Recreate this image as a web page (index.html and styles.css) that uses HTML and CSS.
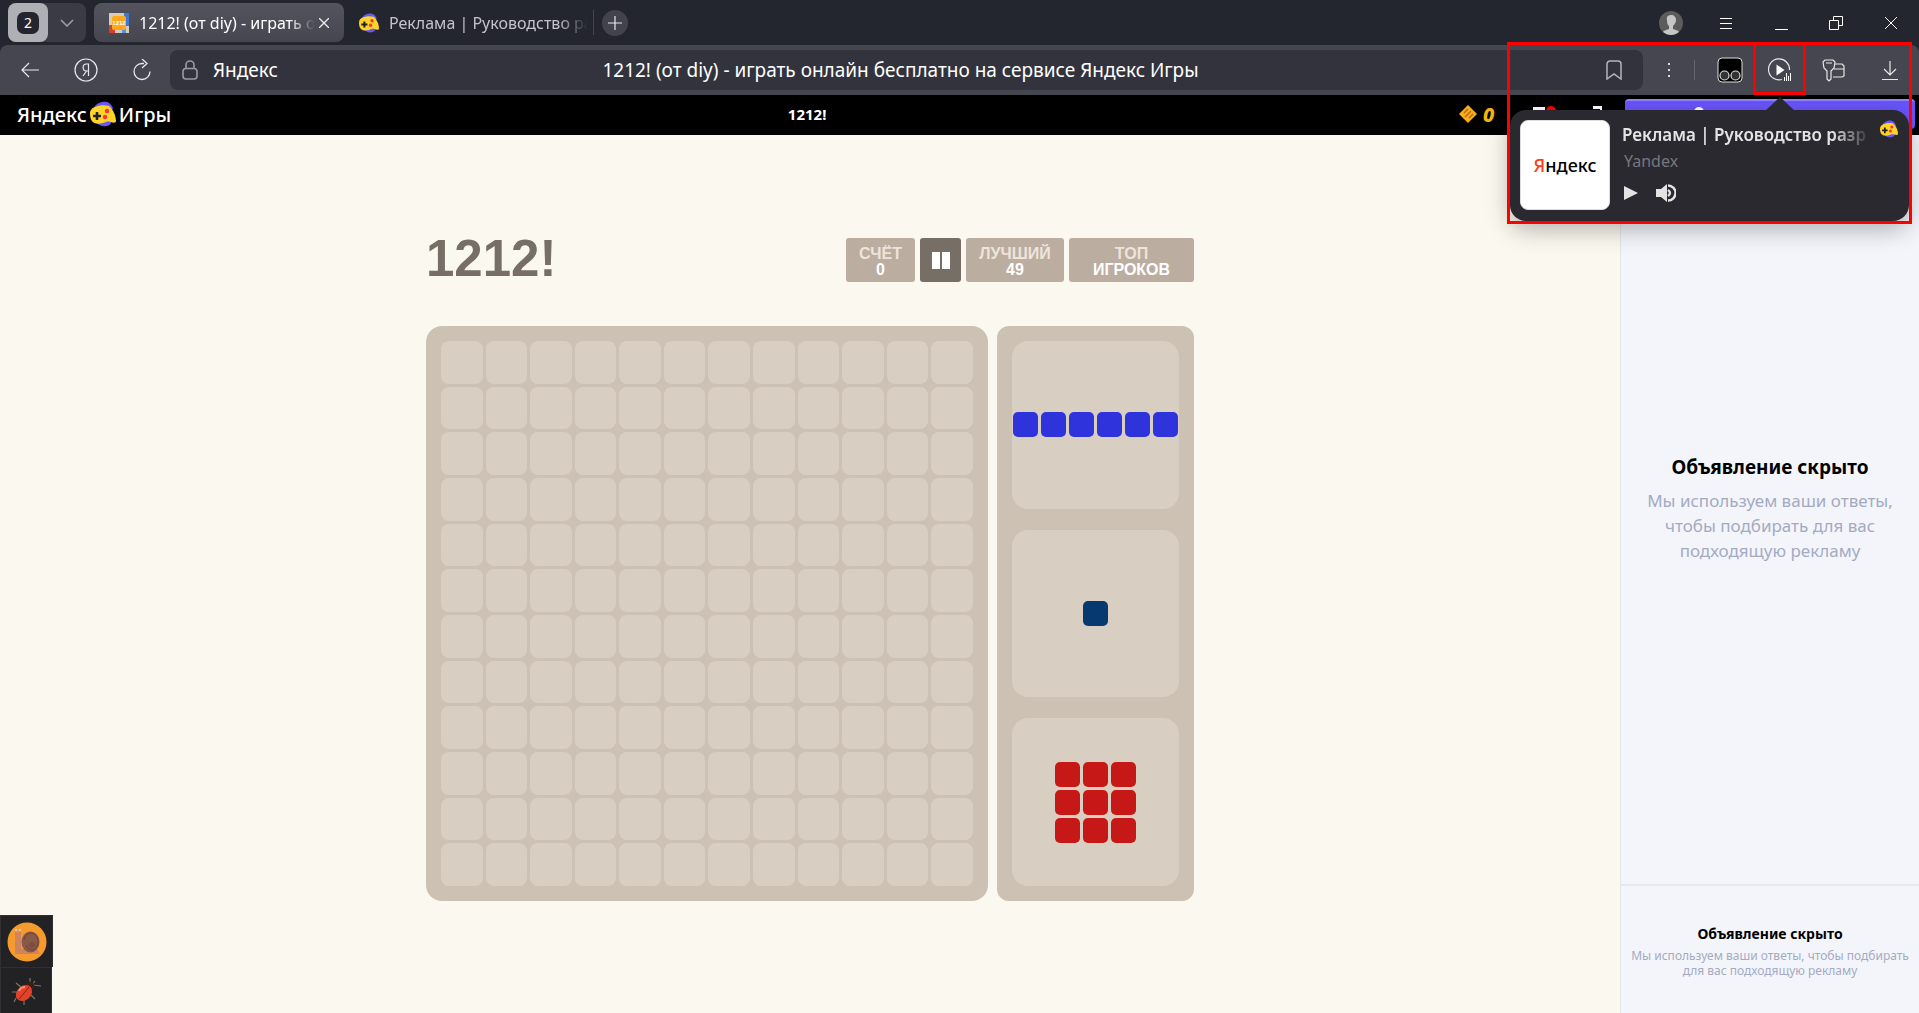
FILE: index.html
```html
<!DOCTYPE html>
<html lang="ru">
<head>
  <meta charset="UTF-8">
  <meta name="viewport" content="width=device-width, initial-scale=1.0">
  <title>1212! (от diy) - играть онлайн бесплатно на сервисе Яндекс Игры</title>
  <link rel="stylesheet" href="styles.css">
</head>
<body>
  <!-- Shared gamepad logo -->
  <svg class="defs" width="0" height="0" aria-hidden="true">
    <symbol id="gamepad" viewBox="0 0 26 26">
      <path d="M3 8C6 2 12 0 17 1c3 1 5 3 6 7l-8 3z" fill="#6b57f5"/>
      <path d="M3 18c3 5 9 8 13 7 3 0 5-2 6-5l-8-3z" fill="#6b57f5"/>
      <path d="M5 6c5-2 10-2 14-1 4 3 7 10 7 15 0 2-3 2-5 1-3-1-5 0-8 1-4 1-8 1-10-1-2-1-3-5-3-8 0-4 2-6 5-7z" fill="#fed42b"/>
      <path d="M7 11v8M3 15h8" stroke="#222" stroke-width="2.600"/>
      <circle cx="17" cy="10" r="2.200" fill="#f33"/>
      <circle cx="15" cy="16" r="2.200" fill="#f33"/>
    </symbol>
  </svg>

  <!-- Browser tabs -->
  <header class="tab-bar">
    <div class="tab-group">
      <button class="group-count" aria-label="Вкладки"><span>2</span></button>
      <button class="group-arrow" aria-label="Группы">
        <svg width="14" height="8" viewBox="0 0 14 8"><path d="M1 1l6 6 6-6" fill="none" stroke="#a0a0a8" stroke-width="1.500"/></svg>
      </button>
    </div>
    <div class="tab active">
      <svg width="20" height="20" viewBox="0 0 20 20">
        <rect width="20" height="20" fill="#d8cbb8"/>
        <path d="M15 0h5v13h-5z" fill="#3c78d8"/><path d="M0 12h6v8H0z" fill="#d6402c"/><path d="M13 15h4v5h-4z" fill="#5a93e2"/>
        <rect x="3" y="3" width="14" height="14" rx="2" fill="#ffa81c"/>
        <text x="10" y="12" text-anchor="middle" class="fav-text">1212</text>
      </svg>
      <span class="tab-title">1212! (от diy) - играть о</span>
      <button class="tab-close" aria-label="Закрыть вкладку">
        <svg width="10" height="10" viewBox="0 0 10 10"><path d="M0 0l10 10M10 0L0 10" stroke="#eee" stroke-width="1.300"/></svg>
      </button>
    </div>
    <div class="tab">
      <svg width="20" height="20"><use href="#gamepad"/></svg>
      <span class="tab-title">Реклама | Руководство ра</span>
    </div>
    <button class="new-tab" aria-label="Новая вкладка">
      <svg width="14" height="14" viewBox="0 0 14 14"><path d="M7 0v14M0 7h14" stroke="#e8e8ea" stroke-width="1.200"/></svg>
    </button>
    <div class="window-buttons">
      <button aria-label="Профиль">
        <svg width="24" height="24" viewBox="0 0 24 24">
          <circle cx="12" cy="12" r="12" fill="#5c5c5c"/>
          <path d="M12 4c-3 0-5 2-4 5 0 4 1 5 2 6v3c-2 1-5 1-6 3 5 4 11 4 16 0-1-2-4-2-6-3v-3c1-1 3-3 3-6 0-3-2-5-5-5z" fill="#c6c6c6"/>
        </svg>
      </button>
      <button aria-label="Меню">
        <svg width="14" height="14" viewBox="0 0 14 14"><path d="M1 2.500h12M1 7.500h12M1 12.500h12" stroke="#fff"/></svg>
      </button>
      <button aria-label="Свернуть">
        <svg width="14" height="14" viewBox="0 0 14 14"><path d="M1 13.500h13" stroke="#fff"/></svg>
      </button>
      <button aria-label="Развернуть">
        <svg width="14" height="14" viewBox="0 0 14 14"><path d="M.5 4.500h9v9h-9zM4.500 4V.5h9v9H10" fill="none" stroke="#fff"/></svg>
      </button>
      <button aria-label="Закрыть">
        <svg width="14" height="14" viewBox="0 0 14 14"><path d="M1 1l12 12M13 1L1 13" stroke="#fff"/></svg>
      </button>
    </div>
  </header>

  <!-- Address bar -->
  <nav class="toolbar">
    <button class="tool" aria-label="Назад">
      <svg width="18" height="16" viewBox="0 0 18 16"><path d="M18 8H1M8 1L1 8l7 7" fill="none" stroke="#e8e8ea" stroke-width="1.200"/></svg>
    </button>
    <button class="tool" aria-label="Яндекс">
      <svg width="24" height="24" viewBox="0 0 24 24" fill="none" stroke="#e8e8ea" stroke-width="1.200">
        <circle cx="12" cy="12" r="11"/><path d="M14.500 18V6h-2C8 6 8 13 12.500 13h2M12.500 13L9 18"/>
      </svg>
    </button>
    <button class="tool" aria-label="Обновить">
      <svg width="18" height="22" viewBox="0 0 18 22" fill="none" stroke="#e8e8ea" stroke-width="1.300"><path d="M11 4.500H9a8 8 0 1 0 8 8M9 0l5 4.500L9 9"/></svg>
    </button>
    <div class="address">
      <svg width="16" height="20" viewBox="0 0 16 20" fill="none" stroke="#9b9ba2" stroke-width="1.600">
        <rect x="1" y="8.500" width="14" height="10.500" rx="3"/><path d="M4 8V5a4 4 0 0 1 8 0v3"/>
      </svg>
      <span class="site">Яндекс</span>
      <span class="page-title">1212! (от diy) - играть онлайн бесплатно на сервисе Яндекс Игры</span>
      <button class="bookmark" aria-label="В закладки">
        <svg width="16" height="20" viewBox="0 0 16 20"><path d="M1 19V4a3 3 0 0 1 3-3h8a3 3 0 0 1 3 3v15l-7-5z" fill="none" stroke="#b4b4ba" stroke-width="1.500"/></svg>
      </button>
    </div>
    <div class="extensions">
      <button class="dots" aria-label="Ещё">
        <svg width="4" height="16" viewBox="0 0 4 16" fill="#dcdce0"><path d="M1 1h2v2H1zM1 7h2v2H1zM1 13h2v2H1z"/></svg>
      </button>
      <button class="tool monkey" aria-label="Tampermonkey">
        <svg width="26" height="26" viewBox="0 0 26 26" stroke="#ddd">
          <rect x="1" y="1" width="24" height="24" rx="4"/>
          <circle cx="7.500" cy="18.500" r="4.500" fill="#333" stroke-width="1.200"/><circle cx="18.500" cy="18.500" r="4.500" fill="#333" stroke-width="1.200"/>
        </svg>
      </button>
      <button class="tool" aria-label="Медиа">
        <svg width="24" height="24" viewBox="0 0 24 24">
          <path d="M14 21.500A10.500 10.500 0 1 1 21.500 12" fill="none" stroke="#e8e8ea" stroke-width="1.200"/>
          <path d="M8.500 6.500v11l8-5.500z" fill="#fff"/>
          <path d="M16.500 19v4M18.500 15v8M20.500 18v5M22.500 15v8" stroke="#fff"/>
        </svg>
      </button>
      <button class="tool" aria-label="Пароли">
        <svg width="24" height="24" viewBox="0 0 24 24" fill="none" stroke="#e8e8ea" stroke-width="1.200">
          <path d="M3 2h8l2 2-1 6-3 3v8l-2 2-2-2v-8l-3-3-1-6zM4 5h6"/><path d="M13 6h7l2 2v10l-2 1h-9M12 11h10"/>
        </svg>
      </button>
      <button class="tool" aria-label="Загрузки">
        <svg width="16" height="20" viewBox="0 0 16 20"><path d="M8 1v14M2 9l6 6 6-6M0 19.500h16" fill="none" stroke="#e8e8ea" stroke-width="1.200"/></svg>
      </button>
    </div>
  </nav>

  <!-- Games header -->
  <div class="games-bar">
    <a href="#" class="logo">Яндекс<svg width="26" height="26"><use href="#gamepad"/></svg>Игры</a>
    <h2>1212!</h2>
    <div class="coins">
      <svg width="18" height="18" viewBox="0 0 18 18"><path d="M9 0l9 9-9 9-9-9z" fill="#f8ad1e"/><path d="M5 8l4-4M6 12l6-6M10 13l4-4" stroke="#b86a08" stroke-width="1.500"/></svg>
      <span>0</span>
    </div>
    <svg class="alerts" width="72" height="12" viewBox="0 0 72 12"><path d="M0 1h12v3H0zM60 0h9v11h-2V3h-7z" fill="#fff"/><circle cx="18" cy="5" r="5" fill="red"/></svg>
    <button class="profile" aria-label="Войти"><svg width="10" height="10"><circle cx="5" cy="5" r="5" fill="#fff"/></svg></button>
  </div>

  <main class="content">
    <section class="game">
      <div class="game-head">
        <h1>1212!</h1>
        <div class="scores">
          <div class="box score"><span>СЧЁТ</span><b>0</b></div>
          <button class="pause" aria-label="Пауза"><i></i><i></i></button>
          <div class="box best"><span>ЛУЧШИЙ</span><b>49</b></div>
          <button class="box top"><span>ТОП</span><b>ИГРОКОВ</b></button>
        </div>
      </div>
      <div class="game-area">
        <div class="board" id="board"></div>
        <div class="pieces">
          <div class="slot"><div class="piece line"><i></i><i></i><i></i><i></i><i></i><i></i></div></div>
          <div class="slot"><div class="piece dot"><i></i></div></div>
          <div class="slot"><div class="piece square"><i></i><i></i><i></i><i></i><i></i><i></i><i></i><i></i><i></i></div></div>
        </div>
      </div>
    </section>

    <aside class="ads">
      <div class="ad-big">
        <h3>Объявление скрыто</h3>
        <p>Мы используем ваши ответы, чтобы подбирать для вас подходящую рекламу</p>
      </div>
      <div class="ad-small">
        <h3>Объявление скрыто</h3>
        <p>Мы используем ваши ответы, чтобы подбирать для вас подходящую рекламу</p>
      </div>
    </aside>

    <!-- Floating buttons in the corner -->
    <div class="widgets">
      <button aria-label="Улитка">
        <svg width="40" height="40" viewBox="0 0 40 40">
          <circle cx="20" cy="20" r="19.500" fill="#f59a2c"/>
          <path d="M8 12q3-3 6 0v15h16l3 5H8z" fill="#cf8460"/>
          <path d="M9 12V8M13 12V8" stroke="#b9775a"/><circle cx="9" cy="8" r="1.300" fill="#d8c4b8"/><circle cx="13" cy="8" r="1.300" fill="#d8c4b8"/>
          <ellipse cx="23.500" cy="20" rx="9" ry="10.500" fill="#8a5947"/>
          <path d="M17 18a7 8 0 0 1 14 2c0 5-3 8-6 8s-6-3-5-5" fill="none" stroke="#6c4236"/>
          <circle cx="25" cy="23" r="3" fill="#7d4d3f"/>
        </svg>
      </button>
      <button aria-label="Жук">
        <svg width="30" height="30" viewBox="0 0 30 30">
          <path d="M19 9V2M22 9l8 1M10 11L5 7M7 16H1M20 19l4 4M13 24v5M24 5l-3 4M5 22l-2 4" stroke="#777" stroke-width="1.200"/>
          <circle cx="19" cy="10" r="4.500" fill="#3a2016"/>
          <ellipse cx="13" cy="17" rx="9" ry="7" fill="#e2412a" transform="rotate(-42 13 17)"/>
          <path d="M18 11L8 23" stroke="#8c1f12"/><path d="M8 15q2-4 6-4" stroke="#ff8b70" stroke-width="2" fill="none"/>
        </svg>
      </button>
    </div>
  </main>

  <!-- Media popup with red frames -->
  <div class="popup">
    <div class="cover"><span>Я</span>ндекс</div>
    <div class="track">
      <div class="track-title"><b>Реклама | Руководство разр</b><svg width="20" height="18" viewBox="0 0 20 18"><use href="#gamepad" width="20" height="18"/></svg></div>
      <p>Yandex</p>
      <div class="controls">
        <button aria-label="Играть"><svg width="14" height="14" viewBox="0 0 14 14"><path d="M0 0l14 7-14 7z" fill="#e4e4e4"/></svg></button>
        <button aria-label="Звук"><svg width="20" height="18" viewBox="0 0 20 18"><path d="M0 5h5l6-5v18l-6-5H0z" fill="#e4e4e4"/><path d="M12 6q4 3 0 6M12 1.500a7.500 7.500 0 0 1 0 15" fill="none" stroke="#e4e4e4" stroke-width="2.400"/></svg></button>
      </div>
    </div>
  </div>
  <div class="frame frame-popup"></div>
  <div class="frame frame-button"></div>

  <script src="board.js"></script>
</body>
</html>
```
FILE: board.js
```js
// Fill the 12x12 board with empty cells
var board = document.getElementById('board');
for (var i = 0; i < 144; i++) {
  board.appendChild(document.createElement('i'));
}
```
FILE: styles.css
```css
/* Reset default styles */
* {
  margin: 0;
  padding: 0;
  box-sizing: border-box;
}

body {
  position: relative;
  min-height: 100vh;
  display: flex;
  flex-direction: column;
  background: #24262f;
  font-family: "Noto Sans", "Open Sans", sans-serif;
  overflow-x: hidden;
}

button {
  display: flex;
  align-items: center;
  justify-content: center;
  border: none;
  background: none;
  font: inherit;
  cursor: pointer;
}

svg {
  display: block;
  flex-shrink: 0;
}

.defs {
  position: absolute;
}

/* Tabs */
.tab-bar {
  display: flex;
  align-items: center;
  height: 45px;
  padding: 0 12px 0 8px;
}

.tab-group {
  display: flex;
  height: 39px;
  margin-right: 8px;
  border-radius: 8px;
  background: #3b3b46;
}

.group-count {
  width: 40px;
  border-radius: 8px;
  background: #afb0b5;
}

.group-count span {
  width: 22px;
  height: 22px;
  border-radius: 7px;
  background: #24262f;
  color: #fff;
  font-size: 14px;
  line-height: 22px;
}

.group-arrow {
  width: 38px;
}

.tab {
  display: flex;
  align-items: center;
  width: 250px;
  height: 39px;
  padding: 0 15px;
  gap: 10px;
  border-radius: 8px;
  color: #c4c4c8;
  font-size: 16px;
}

.tab.active {
  background: linear-gradient(#54545e, #464650);
  color: #fff;
}

.tab-title {
  flex: 1;
  min-width: 0;
  white-space: nowrap;
  -webkit-mask-image: linear-gradient(90deg, #000 85%, transparent);
  mask-image: linear-gradient(90deg, #000 85%, transparent);
}

.tab.active .tab-title {
  margin-right: -6px;
}

.tab:not(.active) {
  height: 25px;
  padding-right: 5px;
  border-right: 1px solid #44454e;
  border-radius: 0;
}

.fav-text {
  font: bold 6px "Liberation Sans", sans-serif;
  fill: #fff;
}

.new-tab {
  width: 26px;
  height: 26px;
  margin-left: 8px;
  border-radius: 50%;
  background: #42434c;
}

.window-buttons {
  display: flex;
  margin-left: auto;
}

.window-buttons button {
  width: 55px;
  height: 39px;
}

.window-buttons button:last-child {
  width: 32px;
  margin-left: 12px;
}

/* Toolbar */
.toolbar {
  display: flex;
  align-items: center;
  height: 50px;
  padding-left: 2px;
  border-radius: 8px 8px 0 0;
  background: #464650;
}

.toolbar > .tool {
  width: 56px;
  height: 40px;
}

.address {
  flex: 1;
  display: flex;
  align-items: center;
  height: 40px;
  padding: 0 21px 0 12px;
  border-radius: 8px;
  background: #33333d;
  color: #fff;
  font-size: 19px;
}

.site {
  width: 100px;
  margin-left: 15px;
}

.page-title {
  flex: 1;
  padding-right: 118px;
  text-align: center;
  white-space: nowrap;
}

.extensions {
  display: flex;
  align-items: center;
}

.extensions .tool {
  width: 54px;
  height: 40px;
}

.dots {
  width: 52px;
  height: 20px;
  border-right: 1px solid #66666f;
}

.extensions .monkey {
  width: 58px;
  padding-left: 12px;
}

.extensions .tool:last-child {
  width: 58px;
}

/* Games header */
.games-bar {
  display: flex;
  align-items: center;
  height: 40px;
  padding: 0 4px 2px 17px;
  background: #000;
  color: #fff;
}

.logo {
  display: flex;
  align-items: center;
  gap: 3px;
  color: #fff;
  font-size: 20px;
  font-weight: 500;
  text-decoration: none;
}

.games-bar h2 {
  flex: 1;
  padding-right: 16px;
  text-align: center;
  font-size: 15px;
  line-height: 20px;
}

.coins {
  display: flex;
  align-items: center;
  gap: 6px;
  width: 74px;
  color: #f5b50a;
  font-size: 20px;
  font-style: italic;
  font-weight: 800;
}

.alerts {
  align-self: flex-start;
  margin: 11px 20px 0 0;
}

.profile {
  align-items: flex-start;
  width: 290px;
  height: 30px;
  padding: 6px 142px 0 0;
  border-top: 2px solid #9184ff;
  border-radius: 4px;
  background: #6a54fc;
}

/* Page */
.content {
  position: relative;
  flex: 1;
  display: flex;
  background: #fbf8ef;
}

.game {
  flex: 1;
  display: flex;
  flex-direction: column;
  align-items: center;
  padding-top: 103px;
  font-family: "Liberation Sans", Arial, sans-serif;
}

.game-head {
  display: flex;
  justify-content: space-between;
  width: 768px;
  height: 44px;
  margin-bottom: 44px;
}

.game h1 {
  color: #776e65;
  font-size: 51px;
  line-height: 42px;
}

.scores {
  display: flex;
  gap: 5px;
}

.box {
  display: flex;
  flex-direction: column;
  align-items: center;
  justify-content: center;
  padding-top: 3px;
  border-radius: 3px;
  background: #bbada0;
  color: #fff;
  font-size: 16px;
  font-weight: bold;
  line-height: 16px;
}

.box span {
  color: #eee4da;
}

.score {
  width: 69px;
}

.best {
  width: 98px;
}

.top {
  width: 125px;
}

.pause {
  gap: 2px;
  width: 41px;
  border-radius: 3px;
  background: #776e65;
}

.pause i {
  width: 8px;
  height: 17px;
  background: #fff;
}

.game-area {
  display: flex;
  gap: 9px;
  width: 768px;
  height: 575px;
}

.board {
  flex: 1;
  display: grid;
  grid-template-columns: repeat(12, 1fr);
  grid-template-rows: repeat(12, 1fr);
  gap: 3px;
  padding: 15px;
  border-radius: 16px;
  background: #cdc1b4;
}

.board i {
  border-radius: 8px;
  background: #d8cec2;
}

.pieces {
  display: grid;
  grid-template-rows: repeat(3, 1fr);
  gap: 21px;
  width: 197px;
  padding: 15px;
  border-radius: 12px;
  background: #cdc1b4;
}

.slot {
  display: flex;
  align-items: center;
  justify-content: center;
  border-radius: 16px;
  background: #d8cec2;
}

.piece {
  display: grid;
  gap: 3px;
}

.piece i {
  width: 25px;
  height: 25px;
  border-radius: 5px;
}

.line {
  grid-template-columns: repeat(6, 1fr);
}

.line i {
  background: #2e33dc;
}

.dot i {
  background: #053970;
}

.square {
  grid-template-columns: repeat(3, 1fr);
}

.square i {
  background: #c61917;
}

/* Ads */
.ads {
  display: flex;
  flex-direction: column;
  width: 299px;
  border-left: 1px solid #e4e7ea;
  background: #f4f5fb;
  color: #000;
  text-align: center;
}

.ads p {
  color: #a3abc2;
}

.ad-big {
  flex: 1;
  display: flex;
  flex-direction: column;
  justify-content: center;
  padding: 0 24px 4px;
}

.ad-big h3 {
  font-size: 19px;
  line-height: 30px;
  margin-bottom: 6px;
}

.ad-big p {
  font-size: 17px;
  line-height: 25px;
}

.ad-small {
  height: 129px;
  padding: 37px 8px 0;
  border-top: 2px solid #e6eaec;
}

.ad-small h3 {
  margin-bottom: 3px;
  font-size: 14px;
  line-height: 22px;
}

.ad-small p {
  font-size: 12px;
  line-height: 15px;
}

.widgets {
  position: absolute;
  left: 0;
  bottom: 0;
}

.widgets button {
  width: 52px;
  height: 46px;
  border: 1px solid #303032;
  border-bottom: none;
  background: #222224;
}

.widgets button:first-child {
  width: 53px;
  height: 52px;
}

/* Media popup */
.popup {
  position: absolute;
  top: 110px;
  right: 10px;
  display: flex;
  gap: 12px;
  width: 399px;
  height: 111px;
  padding: 10px;
  border-radius: 16px;
  background: #2a2930;
  box-shadow: 0 8px 24px rgba(0, 0, 0, 0.3);
}

.popup::before {
  content: "";
  position: absolute;
  top: -13px;
  right: 114px;
  border: 15px solid transparent;
  border-top: none;
  border-bottom: 14px solid #2a2930;
}

.cover {
  width: 90px;
  height: 90px;
  border: 1px solid #ddd;
  border-radius: 8px;
  background: #fff;
  color: #000;
  font-size: 18px;
  font-weight: 500;
  line-height: 88px;
  text-align: center;
}

.cover span {
  color: #fc3f1d;
}

.track {
  flex: 1;
  min-width: 0;
  color: #e4e4e4;
}

.track-title {
  display: flex;
  gap: 9px;
  height: 28px;
}

.track-title b {
  flex: 1;
  min-width: 0;
  white-space: nowrap;
  font-size: 17px;
  font-weight: 600;
  line-height: 30px;
  -webkit-mask-image: linear-gradient(90deg, #000 85%, transparent);
  mask-image: linear-gradient(90deg, #000 85%, transparent);
}

.track p {
  padding-left: 2px;
  color: #77767c;
  font-size: 16px;
  line-height: 26px;
}

.controls {
  display: flex;
  gap: 18px;
  height: 28px;
  padding: 10px 2px 0;
}

.frame {
  position: absolute;
  top: 42px;
  border: 3px solid #f00;
  pointer-events: none;
}

.frame-popup {
  right: 7px;
  width: 405px;
  height: 182px;
}

.frame-button {
  right: 113px;
  width: 53px;
  height: 53px;
}
```
